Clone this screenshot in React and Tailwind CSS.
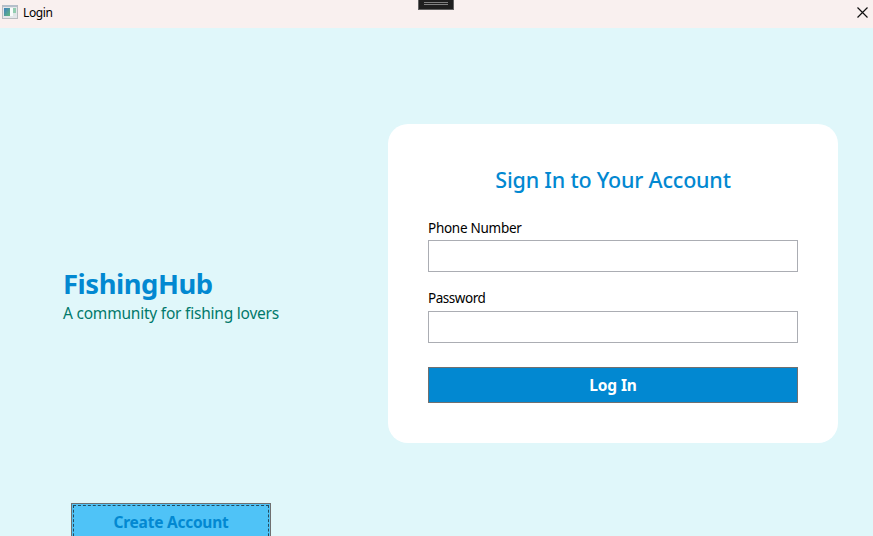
function TitleBar() {
  return (
    <header className="relative flex h-7 shrink-0 items-start justify-between bg-[#f9f0ef]">
      <div className="flex items-start">
        <svg className="ml-0.5 mt-[5px] block" width="16" height="14" viewBox="0 0 16 14">
          <defs>
            <linearGradient id="pane" x1="0" y1="0" x2="1" y2="1">
              <stop offset="0" stopColor="#3f7fc0" />
              <stop offset="1" stopColor="#62b97c" />
            </linearGradient>
          </defs>
          <rect x="0.5" y="0.5" width="15" height="13" fill="#e4e7ea" stroke="#b9bcc0" />
          <rect x="1" y="0" width="14" height="2" fill="#b4bfcb" />
          <rect x="2" y="3" width="6" height="8" fill="url(#pane)" />
          <rect x="8" y="3" width="3" height="8" fill="#f8fbfb" />
          <rect x="11" y="3" width="3" height="5" fill="#93cdb0" />
          <rect x="11" y="8" width="3" height="3" fill="#dfe6e6" />
        </svg>
        <span className="ml-[5px] mt-1 text-[12px] leading-[18px] tracking-[-0.4px] text-black">Login</span>
      </div>
      <svg className="mr-[5px] mt-[7px] block" width="11" height="11" viewBox="0 0 11 11">
        <path d="M0.5 0.5L10.5 10.5M10.5 0.5L0.5 10.5" stroke="#111" strokeWidth="1.2" fill="none" />
      </svg>
      <div className="absolute left-[418px] top-0 flex h-2.5 w-9 flex-col items-center gap-px border border-t-0 border-[#626262] bg-[#1f1f1f] pt-0.5">
        <div className="h-px w-6 bg-[#808080]" />
        <div className="h-px w-6 bg-[#808080]" />
      </div>
    </header>
  );
}

function Field({ label, type, className, labelClassName }) {
  return (
    <label className={`flex flex-col ${className}`}>
      <span className={`text-[13.5px] leading-[19px] text-black ${labelClassName}`}>{label}</span>
      <input type={type} className="h-8 w-full border border-[#abadb3] bg-white px-2 outline-none" />
    </label>
  );
}

export default function App() {
  return (
    <div className="flex h-[536px] w-[873px] flex-col overflow-hidden bg-[#e0f7fa] font-['Noto_Sans',sans-serif]">
      <TitleBar />
      <main className="flex min-h-0 flex-1">
        <section className="flex w-[387.5px] shrink-0 flex-col pl-[63px] pt-[237px]">
          <h1 className="h-[38px] shrink-0 whitespace-nowrap text-[27.4px] font-bold leading-[38px] tracking-[-0.45px] text-[#0288d1]">FishingHub</h1>
          <p className="h-[21px] shrink-0 whitespace-nowrap text-[15.5px] leading-[21px] tracking-[-0.22px] text-[#00796b]">A community for fishing lovers</p>
          <button className="ml-2 mt-[179px] h-10 w-[200px] shrink-0 border border-[#707070] bg-[#4fc3f7] p-px">
            <span className="flex h-full items-center justify-center border border-dashed border-[#244a5c] text-[15.5px] font-bold tracking-[-0.25px] text-[#0288d1]">
              Create Account
            </span>
          </button>
        </section>
        <form className="mt-24 flex h-[319px] w-[450.5px] flex-col rounded-[20px] bg-white pl-[40.5px] pr-10 pt-10">
          <h2 className="h-8 whitespace-nowrap text-center text-[21.5px] font-medium leading-[32px] tracking-[-0.2px] text-[#0288d1]">Sign In to Your Account</h2>
          <Field label="Phone Number" type="text" className="mt-[23px]" labelClassName="mb-0.5 tracking-[-0.27px]" />
          <Field label="Password" type="password" className="mt-[17px]" labelClassName="mb-[3px] tracking-[-0.45px]" />
          <button type="button" className="mt-6 h-9 border border-[#707070] bg-[#0288d1] pt-px text-[15.5px] font-bold tracking-[-0.15px] text-white">
            Log In
          </button>
        </form>
      </main>
    </div>
  );
}
